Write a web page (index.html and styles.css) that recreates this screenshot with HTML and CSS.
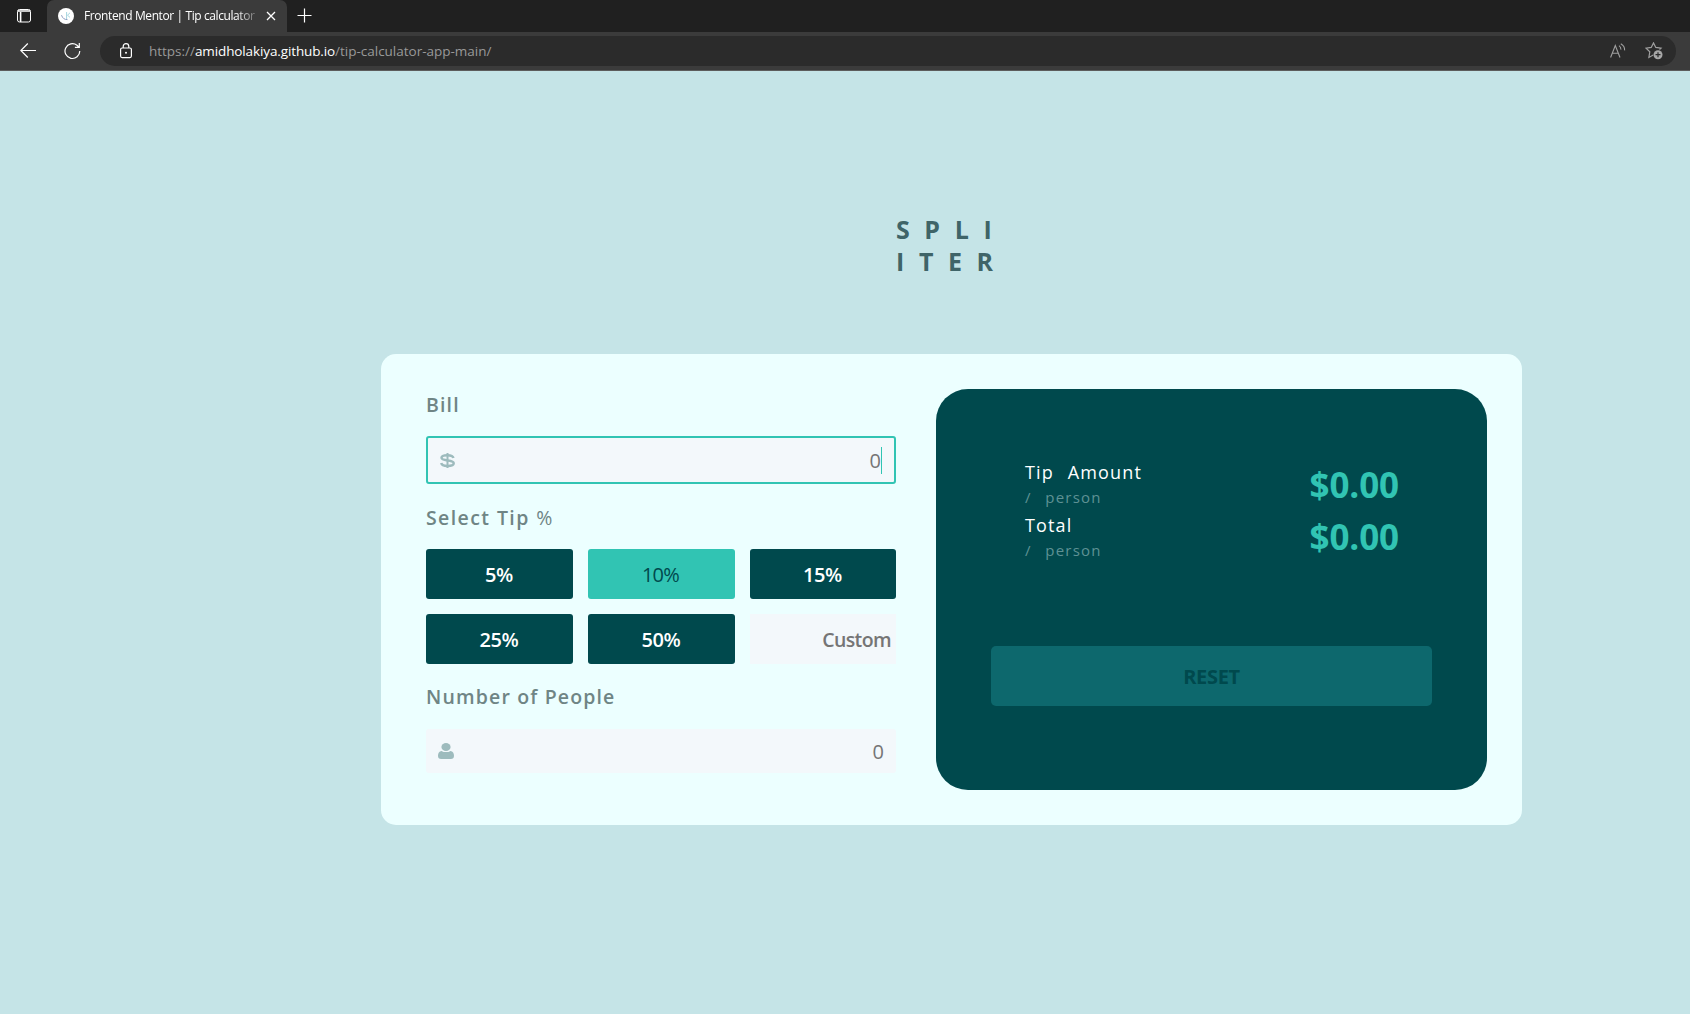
FILE: index.html
```html
<!DOCTYPE html>
<html lang="en">
<head>
<meta charset="utf-8">
<title>Frontend Mentor | Tip calculator app</title>
<link rel="stylesheet" href="styles.css">
</head>
<body>
<header class="browser">
  <div class="tabstrip">
    <svg class="tab-actions" width="16" height="16" viewBox="0 0 16 16" fill="none" stroke="#fff"><rect x="1.5" y="1.5" width="13" height="12.5" rx="2"/><path d="M2 3h12M4.6 4v10" stroke-width="1.6"/></svg>
    <div class="tab">
      <svg class="favicon" width="16" height="16" viewBox="0 0 16 16"><circle cx="8" cy="8" r="8" fill="#fff"/><path d="M8.6 4v7M12 4.8L9.5 7.2 12 9.4" stroke="#a5d5df" fill="none"/><path d="M3.5 7.2c1 3 3 4.600 6 4.400" stroke="#8f9dc2" fill="none"/></svg>
      <span class="tab-title">Frontend Mentor | Tip calculator</span>
      <svg class="tab-close" width="10" height="10" viewBox="0 0 10 10" stroke="#fff" stroke-width="1.3"><path d="M1 1l8 8M9 1L1 9"/></svg>
    </div>
    <svg class="new-tab" width="15" height="15" viewBox="0 0 15 15" stroke="#fff" stroke-width="1.2"><path d="M7.5 0.5v14M0.5 7.5h14"/></svg>
  </div>
  <div class="toolbar">
    <svg class="back" width="16" height="16" viewBox="0 0 16 16" fill="none" stroke="#fff" stroke-width="1.2"><path d="M16 7.500H.8M7.800.500L.8 7.500l7 7"/></svg>
    <svg class="reload" width="17" height="18" viewBox="0 0 17 18" fill="none" stroke="#fff" stroke-width="1.2"><path d="M15.800 9A7.400 7.400 0 1 1 13 3.300L15 5.200M15.300 1v4.400h-4.400"/></svg>
    <div class="address">
      <svg class="lock" width="12" height="16" viewBox="0 0 12 16" fill="none" stroke="#fff" stroke-width="1.2"><rect x=".6" y="5" width="10.800" height="9.600" rx="1.500"/><path d="M3.200 5V3.400a2.800 2.800 0 0 1 5.600 0V5"/><circle cx="6" cy="9.800" r="1" fill="#fff" stroke="none"/></svg>
      <span class="url">https://<span class="host">amidholakiya.github.io</span>/tip-calculator-app-main/</span>
      <svg class="read-aloud" width="16" height="16" viewBox="0 0 16 16" fill="none" stroke="#a0a0a0" stroke-width="1.1"><path d="M.6 14.500L5.300 2.500 10 14.500M2.300 10.300h6M9 2.600c1.400 1 2 2.300 1.900 4M10.800.8c2.800 1.600 4 3.800 3.800 6.600"/></svg>
      <svg class="favorite" width="18" height="18" viewBox="0 0 18 18"><path d="M14.500 7.500L16 6.200l-5.200-.8L8.500.9 6.200 5.400 1 6.200l3.800 3.600-.9 5.600L8.200 13" fill="none" stroke="#a0a0a0" stroke-width="1.200"/><circle cx="13" cy="12.700" r="4.500" fill="#a8a8a8"/><path d="M13 10.200v5M10.500 12.700h5" stroke="#2b2b2b" stroke-width="1.200"/></svg>
    </div>
  </div>
</header>
<main class="page">
  <h1 class="logo">SPLI<br>ITER</h1>
  <section class="card">
    <form class="form">
      <label class="label">Bill</label>
      <div class="field focused">
        <svg class="dollar" width="15" height="15" viewBox="0 0 15 15" fill="none" stroke="#9dbbbd"><path d="M13.400 5C13 2.900 10.800 2.200 7.500 2.200 4 2.200 1.500 3 1.500 4.800c0 3.800 12.200 1.600 12.200 5.400 0 1.900-2.600 2.700-6.200 2.700-3.800 0-5.900-.9-6.300-3" stroke-width="2.500"/><path d="M7.500 0v15" stroke-width="2"/></svg>
        <span class="value">0</span><i class="caret"></i>
      </div>
      <label class="label tip-label">Select Tip <span class="percent">%</span></label>
      <div class="tips">
        <button type="button">5%</button>
        <button type="button" class="active">10%</button>
        <button type="button">15%</button>
        <button type="button">25%</button>
        <button type="button">50%</button>
        <div class="custom">Custom</div>
      </div>
      <label class="label people-label">Number of People</label>
      <div class="field people">
        <svg class="person" width="16" height="16" viewBox="0 0 16 16" fill="#9dbbbd"><ellipse cx="8" cy="4" rx="4.600" ry="4"/><path d="M3.600 7.900C5.800 9.500 10.200 9.500 12.400 7.900 14.900 8 16 10 16 12.800 16 14.900 14.900 16 12.900 16H3.100C1.100 16 0 14.900 0 12.800 0 10 1.100 8 3.600 7.900z"/></svg>
        <span class="value">0</span>
      </div>
    </form>
    <div class="result">
      <div class="totals">
        <div class="names">
          <p class="name">Tip Amount</p>
          <p class="per">/ person</p>
          <p class="name">Total</p>
          <p class="per">/ person</p>
        </div>
        <div class="amounts">
          <p>$0.00</p>
          <p>$0.00</p>
        </div>
      </div>
      <button type="button" class="reset">RESET</button>
    </div>
  </section>
</main>
</body>
</html>
```
FILE: styles.css
```css
* { box-sizing: border-box; margin: 0; padding: 0; }
body { height: 1014px; overflow: hidden; background: #c5e4e7; font-family: "Open Sans", "Noto Sans", sans-serif; }
svg { display: block; flex: none; }
button { border: 0; font-family: inherit; }

.browser { height: 71px; background: #3b3b3b; border-bottom: 1px solid #5c5c5c; color: #fff; }
.tabstrip { display: flex; height: 32px; background: #202020; }
.tab-actions { margin: 8px 0 0 16px; }
.tab { display: flex; align-items: center; width: 240px; margin-left: 15px; padding: 0 11px; background: #3b3b3b; border-radius: 7px 7px 0 0; }
.tab-title { width: 175px; margin: 0 7px 0 10px; white-space: nowrap; font-size: 12px; font-weight: 500; letter-spacing: -0.4px; line-height: 32px; -webkit-mask-image: linear-gradient(90deg, #000 152px, transparent 178px); mask-image: linear-gradient(90deg, #000 152px, transparent 178px); }
.new-tab { margin: 8px 0 0 10px; }
.toolbar { display: flex; align-items: center; height: 38px; padding-left: 20px; }
.reload { margin-left: 28px; }
.address { display: flex; align-items: center; width: 1576px; height: 30px; margin-left: 19px; padding: 0 13px 0 20px; background: #2b2b2b; border-radius: 15px; }
.url { flex: 1; margin-left: 17px; font-size: 13.5px; letter-spacing: -0.01px; line-height: 30px; color: #999; }
.host { color: #fff; letter-spacing: -0.12px; }
.favorite { margin-left: 19px; }

.page { padding: 142px 0 0 381px; }
.logo { width: 112px; margin-left: 515px; font-size: 25px; line-height: 32px; letter-spacing: 14.6px; font-weight: 700; color: #3f6468; white-space: nowrap; }
.card { display: flex; width: 1141px; height: 471px; margin-top: 77px; padding: 35px 35px 35px 45px; background: #ecffff; border-radius: 15px; }
.form { width: 470px; margin-right: 40px; }
.label { display: block; height: 47px; font-size: 19.5px; line-height: 32px; letter-spacing: 1.15px; font-weight: 600; color: #6f8585; }
.percent { font-weight: 400; }
.field { display: flex; align-items: center; height: 48px; padding: 0 12px; background: #f3f8fb; border: 2px solid #31c4b3; border-radius: 3px; font-size: 20px; font-weight: 500; color: #757575; }
.value { margin-left: auto; }
.caret { width: 1px; height: 27px; background: #31c4b3; }
.tip-label { height: 47px; margin-top: 18px; letter-spacing: 1.4px; }
.tips { display: grid; grid-template-columns: 147px 147px 146px; grid-auto-rows: 50px; gap: 15px; font-size: 20px; font-weight: 600; }
.tips button { padding: 1px 1px 0 0; background: #00494d; border-radius: 3px; color: #fff; font-size: 20px; font-weight: 600; letter-spacing: -0.4px; line-height: 49px; }
.tips .active { padding-right: 2px; background: #31c4b3; color: #00494d; font-weight: 500; letter-spacing: -0.8px; }
.custom { padding-right: 5px; background: #f3f8fb; text-align: right; font-size: 19.5px; letter-spacing: -0.6px; line-height: 52px; color: #757575; }
.people-label { height: 48px; margin-top: 17px; }
.field.people { height: 44px; border: 0; }
.result { width: 551px; height: 401px; padding: 71px 55px 0; background: #00494d; border-radius: 32px; }
.totals { display: flex; justify-content: space-between; height: 186px; padding: 0 33px 0 34px; }
.name { height: 28px; font-size: 18px; line-height: 24px; letter-spacing: 1.15px; word-spacing: 8px; color: #fff; }
.per { height: 25px; font-size: 15px; line-height: 18px; letter-spacing: 1.2px; word-spacing: 8.5px; color: #5e9194; }
.amounts { margin-top: -1px; font-size: 35px; font-weight: 700; line-height: 52px; letter-spacing: -0.1px; color: #31c4b3; }
.reset { display: block; width: 441px; height: 60px; background: #0d686d; border-radius: 5px; font-size: 20px; font-weight: 700; letter-spacing: -0.3px; color: #00494d; }
```
